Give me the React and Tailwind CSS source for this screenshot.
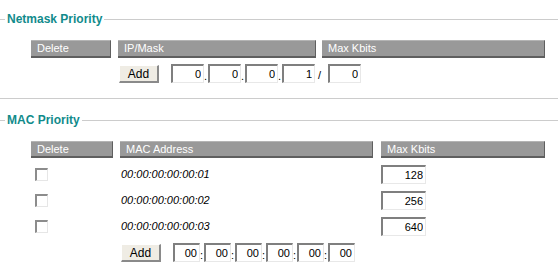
import React from "react";

const Legend = ({ title }) => (
  <div className="flex items-center h-[14px]">
    <div className="w-[5px] h-px bg-[#cccccc]"></div>
    <span className="px-[2px] text-[12px] font-bold leading-[14px] text-[#118b8b]">{title}</span>
    <div className="flex-1 h-px bg-[#cccccc]"></div>
  </div>
);

const HeadCell = ({ w, className = "", children }) => (
  <div
    className={`${w} ${className} h-full flex items-center pl-[6px] bg-[#999999] text-white text-[11px] border-t border-t-[#b4b4b4] border-b-2 border-b-[#5f5f5f] border-r border-r-[#5f5f5f]`}
  >
    {children}
  </div>
);

const Field = ({ w, value }) => (
  <input
    readOnly
    value={value}
    className={`${w} h-[19px] bg-white text-right pr-[2px] text-[11px] text-black outline-none border-t-2 border-l-2 border-t-[#7f7f7f] border-l-[#7f7f7f] border-b border-r border-b-[#e8e8e8] border-r-[#e8e8e8]`}
  />
);

const AddButton = () => (
  <button className="w-[40px] h-[18px] bg-[#efece4] text-[12px] text-black leading-none border-t border-l border-t-white border-l-white border-b-2 border-r-2 border-b-[#8a8a8a] border-r-[#8a8a8a]">
    Add
  </button>
);

const CheckBox = () => (
  <div className="w-[13px] h-[13px] bg-white border-t-2 border-l-2 border-t-[#8c8c8c] border-l-[#8c8c8c] border-b border-r border-b-[#e6e6e6] border-r-[#e6e6e6]"></div>
);

export default function App() {
  const macs = [
    { mac: "00:00:00:00:00:01", kbits: "128" },
    { mac: "00:00:00:00:00:02", kbits: "256" },
    { mac: "00:00:00:00:00:03", kbits: "640" },
  ];

  return (
    <div className="w-[558px] h-[270px] bg-white overflow-hidden font-['Liberation_Sans',Arial,sans-serif] text-[11px] text-black">
      {/* Netmask Priority */}
      <div className="pt-[12px]">
        <Legend title="Netmask Priority" />
        <div className="flex h-[18px] mt-[14px] pl-[31px]">
          <HeadCell w="w-[80px]">Delete</HeadCell>
          <HeadCell w="w-[198px]" className="ml-[7px]">IP/Mask</HeadCell>
          <HeadCell w="w-[223px]" className="ml-[6px]">Max Kbits</HeadCell>
        </div>
        <div className="flex items-end h-[19px] mt-[6px] pl-[119px]">
          <AddButton />
          <div className="flex items-end ml-[12px]">
            <Field w="w-[33px]" value="0" />
            <span className="w-[4px] leading-[13px]">.</span>
            <Field w="w-[33px]" value="0" />
            <span className="w-[4px] leading-[13px]">.</span>
            <Field w="w-[33px]" value="0" />
            <span className="w-[4px] leading-[13px]">.</span>
            <Field w="w-[33px]" value="1" />
            <span className="w-[13px] pl-[3px] leading-[16px]">/</span>
            <Field w="w-[33px]" value="0" />
          </div>
        </div>
      </div>

      <div className="h-px bg-[#cccccc] mt-[15px]"></div>

      {/* MAC Priority */}
      <div className="mt-[14px]">
        <Legend title="MAC Priority" />
        <div className="flex h-[17px] mt-[14px] pl-[31px]">
          <HeadCell w="w-[82px]">Delete</HeadCell>
          <HeadCell w="w-[253px]" className="ml-[7px]">MAC Address</HeadCell>
          <HeadCell w="w-[164px]" className="ml-[8px]">Max Kbits</HeadCell>
        </div>
        <div className="mt-[3px]">
          {macs.map((m) => (
            <div key={m.mac} className="flex items-center h-[26px] pl-[31px]">
              <div className="w-[82px] pl-[4px]">
                <CheckBox />
              </div>
              <div className="w-[253px] ml-[7px] pl-[1px] italic text-[11px]">{m.mac}</div>
              <div className="ml-[8px]">
                <Field w="w-[45px]" value={m.kbits} />
              </div>
            </div>
          ))}
        </div>
        <div className="flex items-end h-[19px] mt-[4px] pl-[121px]">
          <AddButton />
          <div className="flex items-end ml-[12px]">
            {["00", "00", "00", "00", "00"].map((v, i) => (
              <React.Fragment key={i}>
                <Field w="w-[27px]" value={v} />
                <span className="w-[4px] leading-[14px]">:</span>
              </React.Fragment>
            ))}
            <Field w="w-[27px]" value="00" />
          </div>
        </div>
      </div>
    </div>
  );
}
